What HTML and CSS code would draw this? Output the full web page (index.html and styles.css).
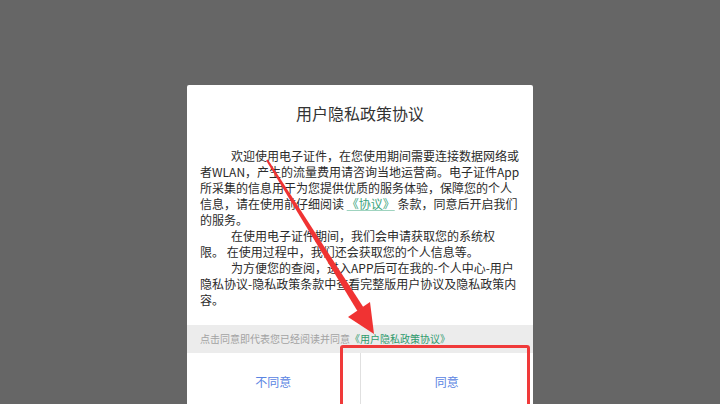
FILE: index.html
```html
<!DOCTYPE html>
<html lang="zh-CN">
<head>
  <meta charset="UTF-8">
  <title>用户隐私政策协议</title>
  <link rel="stylesheet" href="styles.css">
</head>
<body>

<div class="dialog">
  <h1 class="dialog-title">用户隐私政策协议</h1>

  <div class="dialog-body">
    <p class="para">欢迎使用电子证件，在您使用期间需要连接数据网络或<br>者WLAN，产生的流量费用请咨询当地运营商。电子证件App<br>所采集的信息用于为您提供优质的服务体验，保障您的个人<br>信息，请在使用前仔细阅读 <a class="link" href="#">《协议》</a> 条款，同意后开启我们<br>的服务。</p>
    <p class="para">在使用电子证件期间，我们会申请获取您的系统权<br>限。 在使用过程中，我们还会获取您的个人信息等。</p>
    <p class="para">为方便您的查阅，进入APP后可在我的-个人中心-用户<br>隐私协议-隐私政策条款中查看完整版用户协议及隐私政策内<br>容。</p>
  </div>

  <div class="notice">
    点击同意即代表您已经阅读并同意<span class="notice-link">《用户隐私政策协议》</span>
  </div>

  <div class="actions">
    <button class="btn">不同意</button>
    <button class="btn">同意</button>
  </div>
</div>

<!-- annotation: arrow + highlight box -->
<svg class="arrow" width="720" height="404" viewBox="0 0 720 404">
  <polygon points="267.9,159.5 266.1,160.5 357.4,311 363.4,307.3" fill="#f03333"/>
  <polygon points="374,334 370,302 348,317" fill="#f03333"/>
</svg>
<div class="highlight"></div>

</body>
</html>
```

FILE: styles.css
```css
* {
  box-sizing: border-box;
}

html, body {
  height: 100%;
}

body {
  margin: 0;
  background: #666666;
  font-family: "Noto Sans CJK SC", "Noto Sans", sans-serif;
  overflow: hidden;
  position: relative;
}

.dialog {
  width: 346px;
  margin: 85px auto 0;
  background: #fff;
  border-radius: 2px;
}

.dialog-title {
  margin: 0;
  padding-top: 18px;
  font-size: 16px;
  line-height: 20px;
  font-weight: normal;
  color: #333;
  text-align: center;
}

.dialog-body {
  padding: 25px 13px 0;
}

.para {
  margin: 0;
  font-size: 12px;
  line-height: 16px;
  color: #2b2b2b;
  text-indent: 31px;
  white-space: nowrap;
}

.link {
  color: #3aa37c;
  text-decoration: underline;
  text-decoration-color: #9fd3bf;
}

.notice {
  margin-top: 17px;
  height: 28px;
  padding: 0 13px;
  background: #ececec;
  font-size: 10px;
  line-height: 28px;
  color: #a3a3a3;
  white-space: nowrap;
}

.notice-link {
  color: #2f9a6c;
}

.actions {
  display: flex;
  height: 56px;
}

.btn {
  flex: 1;
  border: none;
  background: #fff;
  font-family: inherit;
  font-size: 12px;
  color: #5a84e2;
  padding: 0;
}

.btn + .btn {
  border-left: 1px solid #e0e0e0;
}

.arrow {
  position: absolute;
  top: 0;
  left: 0;
}

.highlight {
  position: absolute;
  left: 340px;
  top: 345px;
  width: 190px;
  height: 70px;
  border: 3px solid #f03a3a;
  border-radius: 3px;
}
```
